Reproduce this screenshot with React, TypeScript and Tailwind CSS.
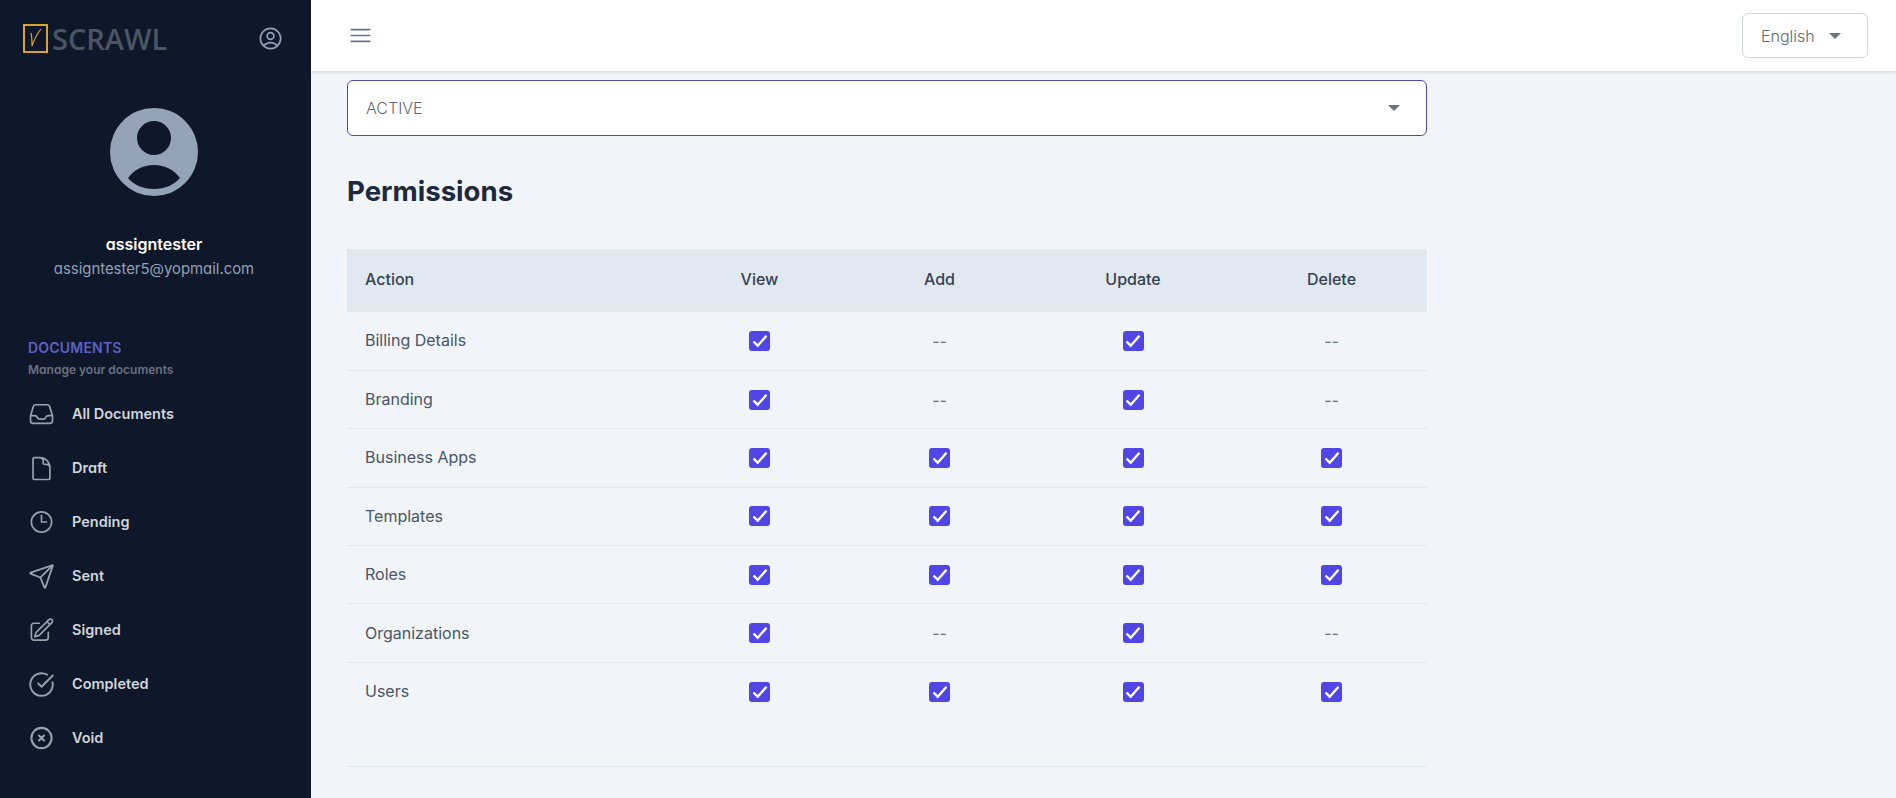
import React from 'react';
import {
    HiOutlineBars3,
    HiOutlineClock,
    HiOutlineDocument,
    HiOutlineInbox,
    HiOutlinePencilSquare,
    HiOutlineUserCircle,
    HiOutlineXCircle,
} from 'react-icons/hi2';
import { CircleCheckBig, Send } from 'lucide-react';

const navItems = [
    { label: 'All Documents', icon: <HiOutlineInbox className="w-[28px] h-[28px]" /> },
    { label: 'Draft', icon: <HiOutlineDocument className="w-[27px] h-[27px]" /> },
    { label: 'Pending', icon: <HiOutlineClock className="w-[28px] h-[28px]" /> },
    { label: 'Sent', icon: <Send className="w-[27px] h-[27px]" strokeWidth={1.6} /> },
    { label: 'Signed', icon: <HiOutlinePencilSquare className="w-[28px] h-[28px]" /> },
    { label: 'Completed', icon: <CircleCheckBig className="w-[27px] h-[27px]" strokeWidth={1.7} /> },
    { label: 'Void', icon: <HiOutlineXCircle className="w-[30px] h-[30px]" strokeWidth={1.8} /> },
];

// true = checkbox, false = "--"
const permissions: { action: string; add: boolean; del: boolean }[] = [
    { action: 'Billing Details', add: false, del: false },
    { action: 'Branding', add: false, del: false },
    { action: 'Business Apps', add: true, del: true },
    { action: 'Templates', add: true, del: true },
    { action: 'Roles', add: true, del: true },
    { action: 'Organizations', add: false, del: false },
    { action: 'Users', add: true, del: true },
];

function Caret() {
    return (
        <svg width="12" height="6" viewBox="0 0 12 6" className="text-gray-500" fill="currentColor">
            <path d="M0 0h12L6 6z" />
        </svg>
    );
}

function Checked() {
    return (
        <span className="flex mx-auto w-[21px] h-[20px] rounded-[3px] bg-[#4f46e5] items-center justify-center">
            <svg width="16" height="14" viewBox="0 0 16 14" fill="none" stroke="white" strokeWidth="2.4">
                <path d="M1.5 7.5l4.2 4.2 8.8-10" />
            </svg>
        </span>
    );
}

function Cell({ on }: { on: boolean }) {
    return <td className="text-center">{on ? <Checked /> : <span className="text-gray-500">--</span>}</td>;
}

export default function App() {
    return (
        <div className="flex h-[798px] overflow-hidden bg-[#f1f4f9] font-['Inter',sans-serif]">
            {/* Sidebar */}
            <aside className="w-[311px] shrink-0 bg-[#0f172a] [font-feature-settings:'cv11']">
                <div className="flex items-center justify-between pl-[23px] pr-[27px] h-[76px]">
                    <div className="flex items-center gap-[4px]">
                        <div className="w-[25px] h-[29px] border-2 border-[#d9a32c] flex items-center justify-center">
                            <svg width="14" height="20" viewBox="0 0 14 20" fill="none" stroke="#d9a32c" strokeWidth="1.2">
                                <path d="M2 5c1 4 1 9 1 13C5 12 8 6 12 1" />
                            </svg>
                        </div>
                        <span className="font-['Open_Sans',sans-serif] font-semibold text-[29px] leading-none text-[#4b5563] [font-feature-settings:normal]">SCRAWL</span>
                    </div>
                    <HiOutlineUserCircle className="w-[27px] h-[27px] text-slate-400" />
                </div>

                <div className="flex flex-col items-center pt-[32px] pr-[3px]">
                    <svg width="88" height="88" viewBox="0 0 88 88">
                        <circle cx="44" cy="44" r="44" fill="#94a3b8" />
                        <circle cx="44" cy="30" r="17" fill="#0f172a" />
                        <path d="M18 70C24 62 33 57 44 57s20 5 26 13c-6 7-15 11-26 11s-20-4-26-11z" fill="#0f172a" />
                    </svg>
                    <div className="mt-[36px] text-white font-semibold text-[16px] leading-[24px]">assigntester</div>
                    <div className="text-slate-400 text-[14.9px] leading-[24px] mt-[1px]">assigntester5@yopmail.com</div>
                </div>

                <div className="pl-[28px] pt-[57px]">
                    <div className="text-[14px] leading-[20px] font-semibold tracking-[0.2px] text-[#5b63c4]">DOCUMENTS</div>
                    <div className="text-[12px] leading-[16px] mt-[4px] font-semibold text-gray-500">Manage your documents</div>
                    <nav className="mt-[9px]">
                        {navItems.map((item) => (
                            <div key={item.label} className="flex items-center h-[54px]">
                                <span className="w-[27px] flex justify-center text-gray-400">{item.icon}</span>
                                <span className="ml-[17px] text-[14.5px] font-semibold text-gray-300">{item.label}</span>
                            </div>
                        ))}
                    </nav>
                </div>
            </aside>

            {/* Main */}
            <div className="flex-1 min-w-0 flex flex-col">
                <header className="h-[71px] shrink-0 bg-white shadow-[0_1px_3px_rgba(0,0,0,0.15)] flex items-start justify-between pl-[36px] pr-[28px] z-10">
                    <HiOutlineBars3 className="w-[27px] h-[27px] text-slate-500 mt-[22px]" />
                    <div className="w-[126px] h-[45px] mt-[13px] border border-gray-300 rounded-[6px] flex items-center justify-between pl-[18px] pr-[26px]">
                        <span className="text-[16px] font-light text-[#5f6875]">English</span>
                        <Caret />
                    </div>
                </header>

                <main className="px-[36px] pt-[9px]">
                    <div className="w-[1080px]">
                        <div className="h-[56px] bg-white border border-[#4f46c0] rounded-[6px] flex items-center justify-between pl-[18px] pr-[26px] text-[16px] font-light text-[#5f6875]">
                            <span>ACTIVE</span>
                            <Caret />
                        </div>

                        <h2 className="mt-[38px] text-[27.6px] leading-[34px] font-bold text-slate-800">Permissions</h2>

                        <table className="mt-[41px] w-full table-fixed border-collapse text-[16px] text-gray-600">
                            <colgroup>
                                <col className="w-[323px]" />
                                <col className="w-[179px]" />
                                <col className="w-[181px]" />
                                <col className="w-[206px]" />
                                <col className="w-[191px]" />
                            </colgroup>
                            <thead>
                                <tr className="h-[63px] bg-[#e2e8f0] text-gray-700">
                                    <th className="pl-[18px] pb-[4px] text-left font-medium">Action</th>
                                    <th className="pb-[4px] font-medium">View</th>
                                    <th className="pb-[4px] font-medium">Add</th>
                                    <th className="pb-[4px] font-medium">Update</th>
                                    <th className="pb-[4px] font-medium">Delete</th>
                                </tr>
                            </thead>
                            <tbody>
                                {permissions.map((row) => (
                                    <tr key={row.action} className="h-[58.4px] border-b border-[#e2e8f0] last:border-b-0">
                                        <td className="pl-[18px] pb-[1px]">{row.action}</td>
                                        <Cell on />
                                        <Cell on={row.add} />
                                        <Cell on />
                                        <Cell on={row.del} />
                                    </tr>
                                ))}
                            </tbody>
                        </table>
                        <div className="mt-[45px] border-t border-[#e2e8f0]" />
                    </div>
                </main>
            </div>
        </div>
    );
}
